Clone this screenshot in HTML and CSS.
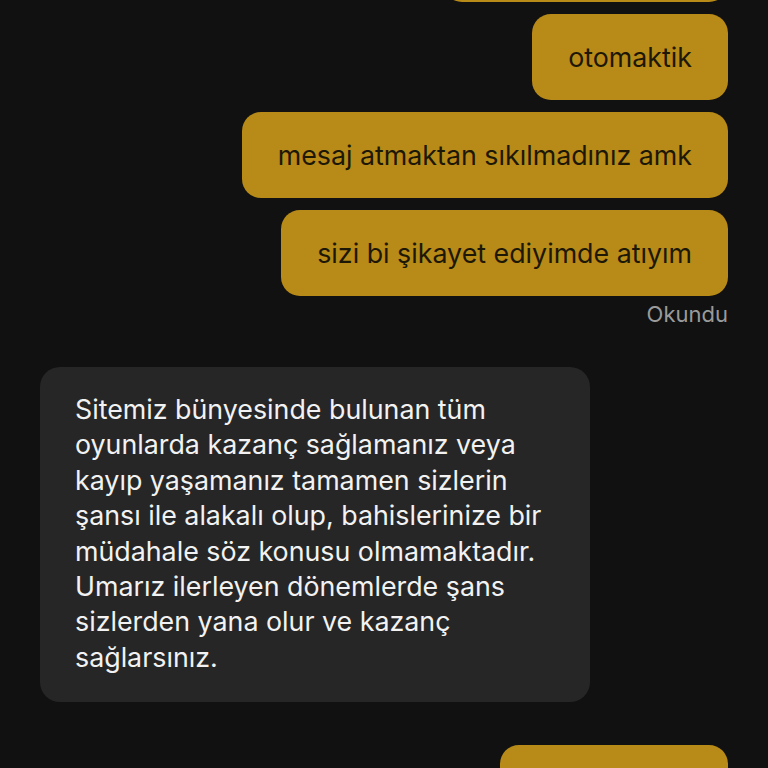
FILE: index.html
```html
<!DOCTYPE html>
<html lang="tr">
<head>
<meta charset="utf-8">
<link rel="stylesheet" href="styles.css">
</head>
<body>
<div class="chat">
  <div class="msg out prev"></div>
  <div class="msg out">otomaktik</div>
  <div class="msg out">mesaj atmaktan sıkılmadınız amk</div>
  <div class="msg out">sizi bi şikayet ediyimde atıyım</div>
  <div class="status">Okundu</div>
  <div class="msg in">Sitemiz bünyesinde bulunan tüm<br>oyunlarda kazanç sağlamanız veya<br>kayıp yaşamanız tamamen sizlerin<br>şansı ile alakalı olup, bahislerinize bir<br>müdahale söz konusu olmamaktadır.<br>Umarız ilerleyen dönemlerde şans<br>sizlerden yana olur ve kazanç<br>sağlarsınız.</div>
  <div class="msg out next"></div>
</div>
</body>
</html>
```

FILE: styles.css
```css
html, body {
  margin: 0;
  padding: 0;
  background: #111111;
  height: 100%;
  overflow: hidden;
}

.chat {
  display: flex;
  flex-direction: column;
  align-items: flex-end;
  padding: 0 40px 0 40px;
  margin-top: -84px;
  font-family: Inter, "Noto Sans", sans-serif;
  font-size: 26.8px;
  line-height: 35.4px;
}

.msg {
  box-sizing: border-box;
  border-radius: 19px;
  padding: 25px 36px;
  white-space: nowrap;
}

.out {
  background: #b88a17;
  color: #1d1806;
  margin-bottom: 12px;
  line-height: 36px;
}

.prev {
  width: 285px;
  height: 86px;
}

.status {
  color: #9a9a9a;
  font-size: 22px;
  line-height: 24px;
  margin-top: -6px;
}

.in {
  align-self: flex-start;
  background: #262626;
  color: #f2f2f2;
  width: 550px;
  margin-top: 41px;
  padding: 25px 35px 27px;
  border-radius: 20px;
}

.next {
  margin-top: 43px;
  width: 228px;
  height: 86px;
}
```
